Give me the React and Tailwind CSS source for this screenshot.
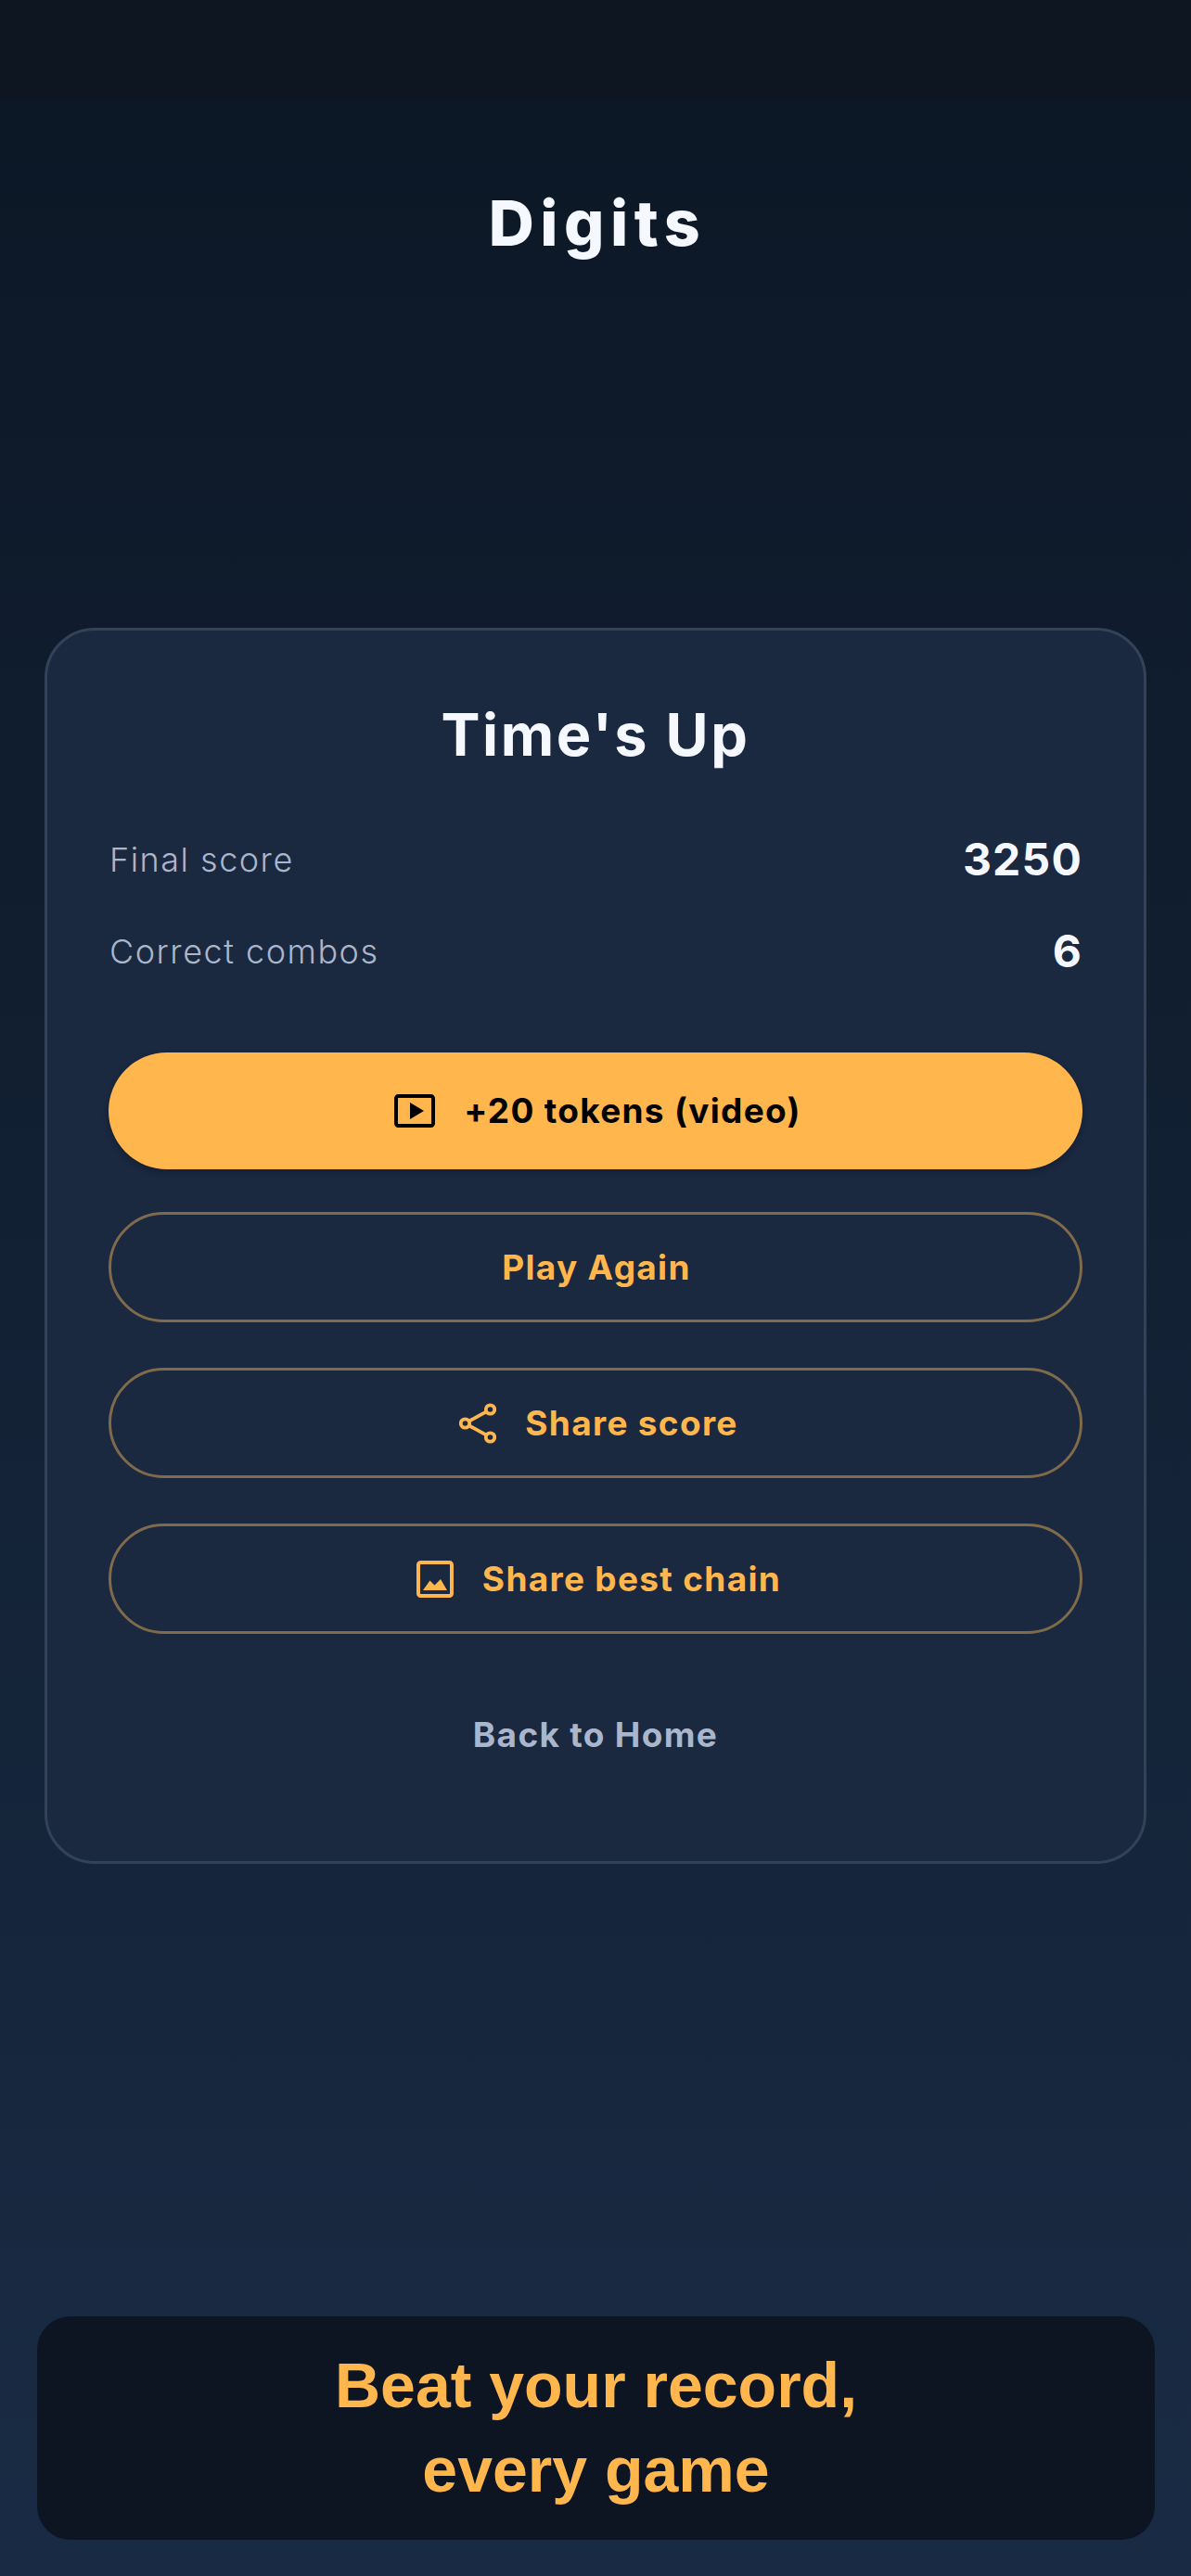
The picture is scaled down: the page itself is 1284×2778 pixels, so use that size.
const PlayIcon = () => (
  <svg width="44" height="36" viewBox="0 0 44 36" fill="none">
    <rect x="2" y="2" width="40" height="32" rx="2.5" stroke="currentColor" strokeWidth="4" />
    <path d="M17 9 L32 18 L17 27 Z" fill="currentColor" />
  </svg>
)

const ShareIcon = () => (
  <svg width="40" height="44" viewBox="0 0 40 44" fill="none" stroke="currentColor" strokeWidth="3.8">
    <circle cx="33.5" cy="7" r="4.7" />
    <circle cx="6.5" cy="22" r="4.7" />
    <circle cx="33.5" cy="37" r="4.7" />
    <path d="M10.6 19.7 L29.4 9.3 M10.6 24.3 L29.4 34.7" />
  </svg>
)

const ImageIcon = () => (
  <svg width="40" height="40" viewBox="0 0 40 40" fill="none">
    <rect x="2" y="2" width="36" height="36" rx="2.5" stroke="currentColor" strokeWidth="4" />
    <path d="M7 32 L14.5 21.5 L19.5 26.5 L26 20 L33 32 Z" fill="currentColor" />
  </svg>
)

function OutlineButton({ icon, children }) {
  return (
    <button className={`h-[119px] w-full rounded-full border-[3px] border-[#7f6a4b] flex items-center justify-center gap-[31px] text-[#ffb74d] text-[37px] font-bold tracking-[1.3px] ${icon ? 'pl-[7px]' : 'pl-[2px]'}`}>
      {icon}
      <span>{children}</span>
    </button>
  )
}

export default function App() {
  return (
    <div className="h-[2778px] flex flex-col bg-gradient-to-b from-[#0c1725] to-[#192b44] font-['Inter',sans-serif]">
      <div className="h-[108px] shrink-0 bg-[#0e1621]" />

      <header className="h-[569px] pt-[84px] pl-[4px] text-center shrink-0">
        <h1 className="text-[68px] leading-[96px] font-extrabold tracking-[6.5px] text-[#f5f8ff]">Digits</h1>
      </header>

      <main className="mx-[48px] h-[1333px] shrink-0 rounded-[54px] border-[3px] border-[#344259] bg-[#1a2840] px-[66px] pt-[76px]">
        <h2 className="text-center text-[63px] leading-[72px] font-bold tracking-[2.6px] text-[#f5f8ff]">Time's Up</h2>

        <div className="mt-[75px] flex items-center justify-between h-[48px]">
          <span className="pl-[1px] text-[36px] font-light tracking-[1.5px] text-[#a9b6cc]">Final score</span>
          <span className="text-[48px] font-bold tracking-[1.2px] text-[#f5f8ff]">3250</span>
        </div>
        <div className="mt-[51px] flex items-center justify-between h-[48px]">
          <span className="pl-[1px] text-[36px] font-light tracking-[1.5px] text-[#a9b6cc]">Correct combos</span>
          <span className="text-[48px] font-bold tracking-[1.2px] text-[#f5f8ff]">6</span>
        </div>

        <button className="mt-[85px] pl-[5px] h-[126px] w-full rounded-full bg-[#ffb74d] flex items-center justify-center gap-[31px] text-black text-[37px] font-bold tracking-[1.3px] shadow-[0_3px_6px_rgba(0,0,0,0.25)]">
          <PlayIcon />
          <span>+20 tokens (video)</span>
        </button>

        <div className="mt-[46px] flex flex-col gap-[49px]">
          <OutlineButton>Play Again</OutlineButton>
          <OutlineButton icon={<ShareIcon />}>Share score</OutlineButton>
          <OutlineButton icon={<ImageIcon />}>Share best chain</OutlineButton>
        </div>

        <p className="mt-[85px] text-center text-[37px] leading-[48px] font-bold tracking-[1.3px] text-[#a9b6cc]">Back to Home</p>
      </main>

      <footer className="mt-[488px] ml-[40px] w-[1205px] h-[241px] pb-[2px] shrink-0 rounded-[36px] bg-[#0d1422] flex items-center justify-center text-center text-[#ffb74d] text-[68px] leading-[91px] font-bold font-['Liberation_Sans',sans-serif]">
        <p>Beat your record,<br />every game</p>
      </footer>
    </div>
  )
}
